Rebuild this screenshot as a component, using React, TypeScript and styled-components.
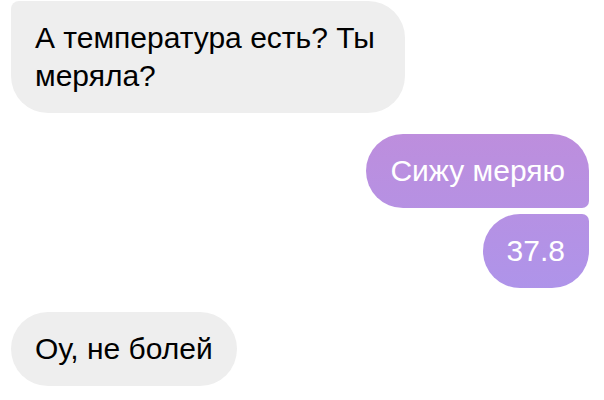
import React from 'react';
import styled, { createGlobalStyle, css } from 'styled-components';

const Global = createGlobalStyle`
  html, body {
    margin: 0;
    padding: 0;
    background: #ffffff;
  }
  body {
    font-family: "Liberation Sans", Arial, sans-serif;
  }
`;

const Chat = styled.div`
  width: 604px;
  height: 400px;
  box-sizing: border-box;
  padding: 1px 15px 0 11px;
  display: flex;
  flex-direction: column;
  overflow: hidden;
`;

const Group = styled.div<{ $out?: boolean; $gap: number }>`
  display: flex;
  flex-direction: column;
  align-items: ${(p) => (p.$out ? 'flex-end' : 'flex-start')};
  gap: 6px;
  margin-top: ${(p) => p.$gap}px;
`;

type Corner = 'first' | 'last' | 'single' | 'top-cut';

const Bubble = styled.div<{ $out?: boolean; $corner: Corner }>`
  box-sizing: border-box;
  max-width: 394px;
  padding: 18px 24px 18px 24px;
  font-size: 30px;
  line-height: 38px;
  border-radius: 37px;
  color: #000;
  background: #eeeeee;

  ${(p) =>
    p.$out &&
    css`
      color: #ffffff;
      background: linear-gradient(180deg, #bd8edd 0px, #ae94ea 160px);
      background-attachment: fixed;
      background-position: 0 134px;
      background-size: 100% 160px;
    `}

  ${(p) => p.$corner === 'top-cut' && css`border-top-left-radius: 8px;`}
  ${(p) => p.$corner === 'first' && css`border-bottom-right-radius: 7px;`}
  ${(p) => p.$corner === 'last' && css`border-top-right-radius: 7px;`}
`;

export default function App() {
  return (
    <>
      <Global />
      <Chat>
        <Group $gap={0}>
          <Bubble $corner="top-cut">А температура есть? Ты меряла?</Bubble>
        </Group>
        <Group $out $gap={21}>
          <Bubble $out $corner="first">Сижу меряю</Bubble>
          <Bubble $out $corner="last">37.8</Bubble>
        </Group>
        <Group $gap={24}>
          <Bubble $corner="single">Оу, не болей</Bubble>
        </Group>
      </Chat>
    </>
  );
}
